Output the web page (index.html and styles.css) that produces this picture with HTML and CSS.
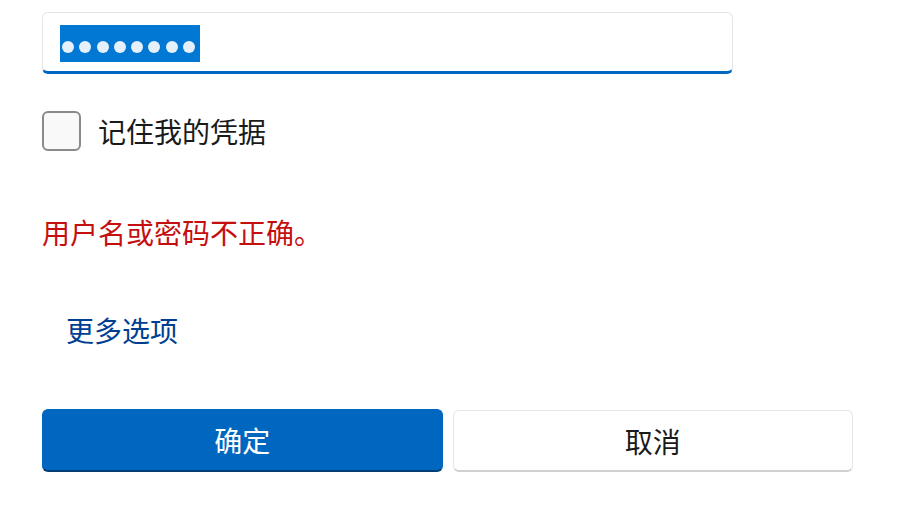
FILE: index.html
```html
<html>
	<head>
		<link rel="stylesheet" href="styles.css">
	</head>
	<body>
		<div class="dialog">
			<div class="passwordBox">
				<div class="selection">
					<span class="dot"></span><span class="dot"></span><span class="dot"></span><span class="dot"></span>
					<span class="dot"></span><span class="dot"></span><span class="dot"></span><span class="dot"></span>
				</div>
			</div>

			<label class="remember">
				<span class="checkbox"></span>
				<span class="label">记住我的凭据</span>
			</label>

			<div class="error">用户名或密码不正确。</div>

			<div class="moreOptions">更多选项</div>

			<div class="buttons">
				<div class="button primary">确定</div>
				<div class="button">取消</div>
			</div>
		</div>
	</body>
</html>
```

FILE: styles.css
```css
html, body {
	margin: 0;
	padding: 0;
	width: 100%;
	height: 100%;
	background: #fff;
}

.dialog {
	display: flex;
	flex-direction: column;
	align-items: flex-start;
	width: 811px;
	padding: 12px 0 0 42px;
	font-family: "Noto Sans CJK SC", "Noto Sans", sans-serif;
	font-size: 28px;
	color: #1a1a1a;
}

.passwordBox {
	box-sizing: border-box;
	width: 691px;
	height: 62px;
	border: 1px solid #e5e5e5;
	border-bottom: 3px solid #0067c0;
	border-radius: 6px;
	background: #fff;
	padding: 12px 0 0 17px;
}

.selection {
	display: flex;
	align-items: center;
	gap: 5.3px;
	width: 140px;
	height: 37px;
	padding: 6px 0 0 2px;
	box-sizing: border-box;
	background: #0078d4;
}

.dot {
	width: 12px;
	height: 12px;
	border-radius: 50%;
	background: #e5f0fb;
}

.remember {
	display: flex;
	align-items: center;
	gap: 17px;
	margin-top: 37px;
}

.checkbox {
	box-sizing: border-box;
	width: 39px;
	height: 40px;
	border: 2px solid #8a8a8a;
	border-radius: 6px;
	background: #f9f9f9;
}

.label {
	line-height: 40px;
}

.error {
	margin-top: 61px;
	line-height: 40px;
	color: #c50f0f;
}

.moreOptions {
	margin-top: 58px;
	padding-left: 24px;
	line-height: 40px;
	color: #003e92;
}

.buttons {
	display: flex;
	gap: 10px;
	width: 811px;
	margin-top: 60px;
}

.button {
	box-sizing: border-box;
	flex: 1;
	height: 62px;
	display: flex;
	align-items: center;
	justify-content: center;
	border: 1px solid #e5e5e5;
	border-bottom: 2px solid #d0d0d0;
	border-radius: 6px;
	background: #fff;
	color: #1a1a1a;
}

.button.primary {
	height: 63px;
	margin-top: -1px;
	border: 1px solid #0067c0;
	border-bottom: 2px solid #003e73;
	background: #0067c0;
	color: #fff;
}
```
